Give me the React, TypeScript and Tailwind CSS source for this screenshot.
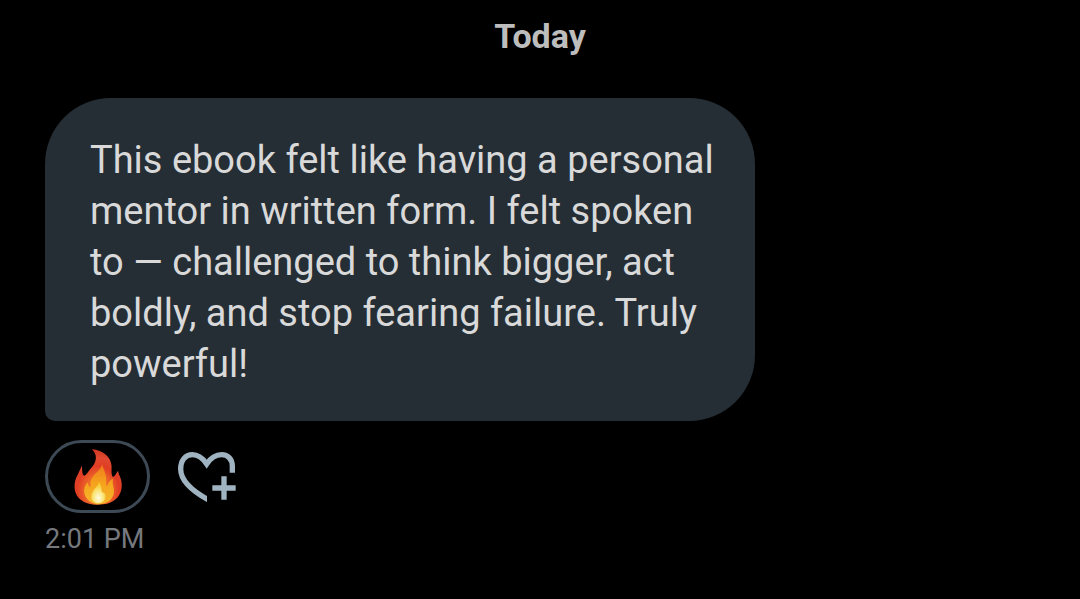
const lines = [
  "This ebook felt like having a personal",
  "mentor in written form. I felt spoken",
  "to — challenged to think bigger, act",
  "boldly, and stop fearing failure. Truly",
  "powerful!",
];

function FireIcon() {
  return (
    <svg viewBox="0 0 140 165" className="h-14 w-12" aria-hidden="true">
      <defs>
        <radialGradient id="outer" cx="0.5" cy="0.75" r="0.75">
          <stop offset="0.3" stopColor="#f0702a" />
          <stop offset="0.6" stopColor="#e03c24" />
          <stop offset="0.8" stopColor="#e04a30" />
          <stop offset="1" stopColor="#cf3520" />
        </radialGradient>
        <linearGradient id="middle" x1="0" y1="0" x2="0" y2="1">
          <stop offset="0" stopColor="#ee7a1c" />
          <stop offset="0.5" stopColor="#f5a51d" />
          <stop offset="1" stopColor="#f4b62c" />
        </linearGradient>
        <radialGradient id="inner" cx="0.5" cy="0.75" r="0.6">
          <stop offset="0" stopColor="#fffbe0" />
          <stop offset="0.5" stopColor="#fbe98a" />
          <stop offset="1" stopColor="#f8cc35" />
        </radialGradient>
      </defs>
      <path
        fill="url(#outer)"
        d="M52 1C82 3 108 22 110 50C110 64 109 76 113 82C120 82 122 73 129 64C130 77 140 84 140 106C140 143 113 164 70 164C27 164 0 143 1 108C2 84 12 76 22 49C25 59 21 72 29 79C37 76 40 67 50 56C66 40 70 17 52 1Z"
      />
      <path
        fill="url(#middle)"
        d="M82 45C78 66 54 73 49 94C46 105 51 108 47 112C42 112 41 105 40 99C27 110 26 129 35 143C43 156 57 163 72 163C97 163 115 149 117 127C118 111 110 103 115 88C106 90 100 101 97 110C91 105 95 98 94 88C93 70 87 63 82 45Z"
      />
      <path
        fill="url(#inner)"
        d="M72 97C74 107 60 113 54 126C44 146 54 159 70 160C86 159 95 148 91 134C89 126 85 131 82 126C78 118 83 109 72 97Z"
      />
    </svg>
  );
}

function AddReactionIcon() {
  return (
    <svg
      viewBox="0 0 174 150"
      className="h-[50px] w-[58px]"
      fill="none"
      stroke="#9fb3c1"
      strokeWidth="16"
      aria-hidden="true"
    >
      <clipPath id="heart">
        <path d="M0 0H174V62H87V150H0Z" />
      </clipPath>
      <path
        clipPath="url(#heart)"
        d="M163 70V42C163 22 150 8 131 8C110 8 96 21 86 36C76 21 63 8 43 8C22 8 8 25 8 51C8 88 46 119 92 144"
      />
      <path d="M138 73V143M103 108H173" />
    </svg>
  );
}

export default function App() {
  return (
    <main className="min-h-screen bg-black px-[45px] pt-3 font-[Roboto,sans-serif]">
      <h1 className="text-center text-[34px] leading-[48px] font-bold text-[#bdbdbd]">
        Today
      </h1>
      <article className="mt-[38px]">
        <p className="w-[710px] max-w-full rounded-[66px] rounded-bl-[10px] bg-[#252e35] px-[45px] pt-[37px] pb-[31px] text-[38px] leading-[51px] text-[#d9d9d9]">
          {lines.map((line) => (
            <span key={line} className="block whitespace-nowrap">
              {line}
            </span>
          ))}
        </p>
        <div className="mt-[19px] flex items-center gap-7">
          <button
            type="button"
            aria-label="Fire reaction"
            className="flex h-[73px] w-[105px] items-center justify-center rounded-full border-3 border-[#3d4a55]"
          >
            <FireIcon />
          </button>
          <button type="button" aria-label="Add reaction">
            <AddReactionIcon />
          </button>
        </div>
        <time className="mt-2 block text-[27px] leading-9 text-[#75797e]">
          2:01 PM
        </time>
      </article>
    </main>
  );
}
